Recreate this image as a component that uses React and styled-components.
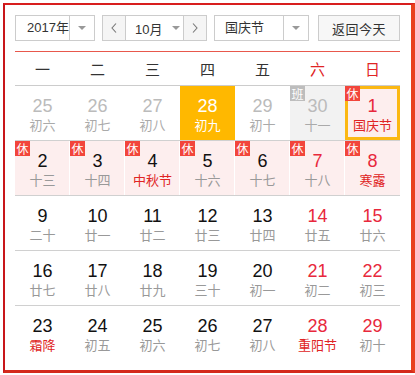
import React from "react";
import styled, { createGlobalStyle } from "styled-components";

const GlobalStyle = createGlobalStyle`
  html, body {
    margin: 0;
    padding: 0;
    background: #fff;
  }
  body {
    font-family: "Liberation Sans", "Noto Sans CJK SC", sans-serif;
    color: #333;
  }
`;

const Frame = styled.div`
  box-sizing: border-box;
  width: 412px;
  margin: 3px 0 0 3px;
  padding: 10px 11px 10px 10px;
  border-style: solid;
  border-width: 2px 4px 3px 2px;
  border-color: #d81e1e #e8401e #d42a1c #c8161a;
  background: #fff;
`;

const Toolbar = styled.div`
  display: flex;
  align-items: center;
  height: 26px;
  gap: 7px;
`;

const Select = styled.div`
  box-sizing: border-box;
  display: flex;
  width: ${(p) => p.$width}px;
  height: 26px;
  border: 1px solid #ccc;
  background: #fff;
  font-size: 13px;
  color: #333;
`;

const SelectText = styled.div`
  flex: 1;
  display: flex;
  align-items: center;
  padding-left: ${(p) => p.$pad || 0}px;
  line-height: 24px;
`;

const Caret = styled.div`
  box-sizing: border-box;
  width: ${(p) => p.$width || 25}px;
  display: flex;
  align-items: center;
  justify-content: center;
  border-left: 1px solid #ccc;

  &::after {
    content: "";
    border-left: 4px solid transparent;
    border-right: 4px solid transparent;
    border-top: 4px solid #999;
  }
`;

const MonthGroup = styled.div`
  box-sizing: border-box;
  display: flex;
  width: 105px;
  height: 26px;
  border: 1px solid #ccc;
  font-size: 13px;
`;

const ArrowButton = styled.div`
  width: 22px;
  display: flex;
  align-items: center;
  justify-content: center;
  background: #f5f5f5;
  border-${(p) => (p.$side === "left" ? "right" : "left")}: 1px solid #ccc;
`;

const MonthLabel = styled.div`
  flex: 1;
  display: flex;
  align-items: center;
  padding-left: 9px;
  gap: 10px;

  &::after {
    content: "";
    border-left: 4px solid transparent;
    border-right: 4px solid transparent;
    border-top: 4px solid #999;
  }
`;

const TodayButton = styled.div`
  box-sizing: border-box;
  margin-left: auto;
  width: 82px;
  height: 26px;
  border: 1px solid #ccc;
  background: #f7f7f7;
  font-size: 13px;
  color: #333;
  display: flex;
  align-items: center;
  justify-content: center;
  letter-spacing: 0.5px;
`;

const WeekHeader = styled.div`
  display: grid;
  grid-template-columns: repeat(7, 55px);
  margin-top: 10px;
  border-top: 1px solid #e8584c;
  border-bottom: 1px solid #ccc;
  height: 33px;
`;

const WeekDay = styled.div`
  display: flex;
  align-items: center;
  justify-content: center;
  font-size: 15px;
  color: ${(p) => (p.$weekend ? "#e02424" : "#333")};
  font-family: "Noto Sans CJK SC", sans-serif;
`;

const Row = styled.div`
  display: grid;
  grid-template-columns: repeat(7, 55px);
  height: 54px;
  border-bottom: ${(p) => (p.$last ? "none" : "1px solid #d0d0d0")};
`;

const bgFor = (k) =>
  ({ today: "#ffb800", pink: "#fdeeee", sel: "#fdeeee", gray: "#f2f2f2" }[k] ||
  "transparent");

const Cell = styled.div`
  position: relative;
  box-sizing: border-box;
  padding-top: 10px;
  text-align: center;
  background: ${(p) => bgFor(p.$kind)};
  box-shadow: ${(p) =>
    p.$kind === "sel"
      ? "inset 0 0 0 3px #fbb813"
      : p.$kind === "pink"
      ? "inset -1px 0 0 #fff"
      : "none"};

  &:last-child {
    box-shadow: ${(p) => (p.$kind === "sel" ? "inset 0 0 0 3px #fbb813" : "none")};
  }
`;

const DayNum = styled.div`
  font-size: 18px;
  line-height: 20px;
  color: ${(p) => p.$color};
`;

const Lunar = styled.div`
  font-size: 13px;
  line-height: 18px;
  color: ${(p) => p.$color};
  font-family: "Noto Sans CJK SC", sans-serif;
`;

const Badge = styled.span`
  position: absolute;
  left: 0;
  top: 0;
  width: 15px;
  height: 15px;
  background: ${(p) => (p.$work ? "#bdbdbd" : "#f2453b")};
  color: #fff;
  font-size: 12px;
  line-height: 15px;
  text-align: center;
  font-family: "Noto Sans CJK SC", sans-serif;
`;

const Chevron = ({ dir }) => (
  <svg width="6" height="10" viewBox="0 0 6 10">
    <polyline
      points={dir === "left" ? "5,0.5 1,5 5,9.5" : "1,0.5 5,5 1,9.5"}
      fill="none"
      stroke="#777"
      strokeWidth="1.1"
    />
  </svg>
);

// d: day, l: lunar, k: cell kind, n: number colour, c: lunar colour, b: badge
const GRAY_N = "#bbb";
const GRAY_L = "#aaa";
const BLACK = "#111";
const LUNAR = "#999";
const RED = "#e8283c";
const FEST = "#e02424";

const rows = [
  [
    { d: 25, l: "初六", n: GRAY_N, c: GRAY_L },
    { d: 26, l: "初七", n: GRAY_N, c: GRAY_L },
    { d: 27, l: "初八", n: GRAY_N, c: GRAY_L },
    { d: 28, l: "初九", k: "today", n: "#fff", c: "#fff" },
    { d: 29, l: "初十", n: GRAY_N, c: GRAY_L },
    { d: 30, l: "十一", k: "gray", n: GRAY_N, c: GRAY_L, b: "班" },
    { d: 1, l: "国庆节", k: "sel", n: RED, c: FEST, b: "休" },
  ],
  [
    { d: 2, l: "十三", k: "pink", b: "休" },
    { d: 3, l: "十四", k: "pink", b: "休" },
    { d: 4, l: "中秋节", k: "pink", c: FEST, b: "休" },
    { d: 5, l: "十六", k: "pink", b: "休" },
    { d: 6, l: "十七", k: "pink", b: "休" },
    { d: 7, l: "十八", k: "pink", n: RED, b: "休" },
    { d: 8, l: "寒露", k: "pink", n: RED, c: FEST, b: "休" },
  ],
  [
    { d: 9, l: "二十" },
    { d: 10, l: "廿一" },
    { d: 11, l: "廿二" },
    { d: 12, l: "廿三" },
    { d: 13, l: "廿四" },
    { d: 14, l: "廿五", n: RED },
    { d: 15, l: "廿六", n: RED },
  ],
  [
    { d: 16, l: "廿七" },
    { d: 17, l: "廿八" },
    { d: 18, l: "廿九" },
    { d: 19, l: "三十" },
    { d: 20, l: "初一" },
    { d: 21, l: "初二", n: RED },
    { d: 22, l: "初三", n: RED },
  ],
  [
    { d: 23, l: "霜降", c: FEST },
    { d: 24, l: "初五" },
    { d: 25, l: "初六" },
    { d: 26, l: "初七" },
    { d: 27, l: "初八" },
    { d: 28, l: "重阳节", n: RED, c: FEST },
    { d: 29, l: "初十", n: RED },
  ],
];

const weekDays = ["一", "二", "三", "四", "五", "六", "日"];

export default function App() {
  return (
    <>
      <GlobalStyle />
      <Frame>
        <Toolbar>
          <Select $width={80}>
            <SelectText $pad={11}>2017年</SelectText>
            <Caret $width={25} />
          </Select>
          <MonthGroup>
            <ArrowButton $side="left">
              <Chevron dir="left" />
            </ArrowButton>
            <MonthLabel>10月</MonthLabel>
            <ArrowButton $side="right">
              <Chevron dir="right" />
            </ArrowButton>
          </MonthGroup>
          <Select $width={95}>
            <SelectText $pad={10}>国庆节</SelectText>
            <Caret $width={25} />
          </Select>
          <TodayButton>返回今天</TodayButton>
        </Toolbar>

        <WeekHeader>
          {weekDays.map((w, i) => (
            <WeekDay key={w} $weekend={i >= 5}>
              {w}
            </WeekDay>
          ))}
        </WeekHeader>

        {rows.map((row, ri) => (
          <Row key={ri} $last={ri === rows.length - 1}>
            {row.map((cell, ci) => (
              <Cell key={ci} $kind={cell.k}>
                {cell.b && <Badge $work={cell.b === "班"}>{cell.b}</Badge>}
                <DayNum $color={cell.n || BLACK}>{cell.d}</DayNum>
                <Lunar $color={cell.c || LUNAR}>{cell.l}</Lunar>
              </Cell>
            ))}
          </Row>
        ))}
      </Frame>
    </>
  );
}
